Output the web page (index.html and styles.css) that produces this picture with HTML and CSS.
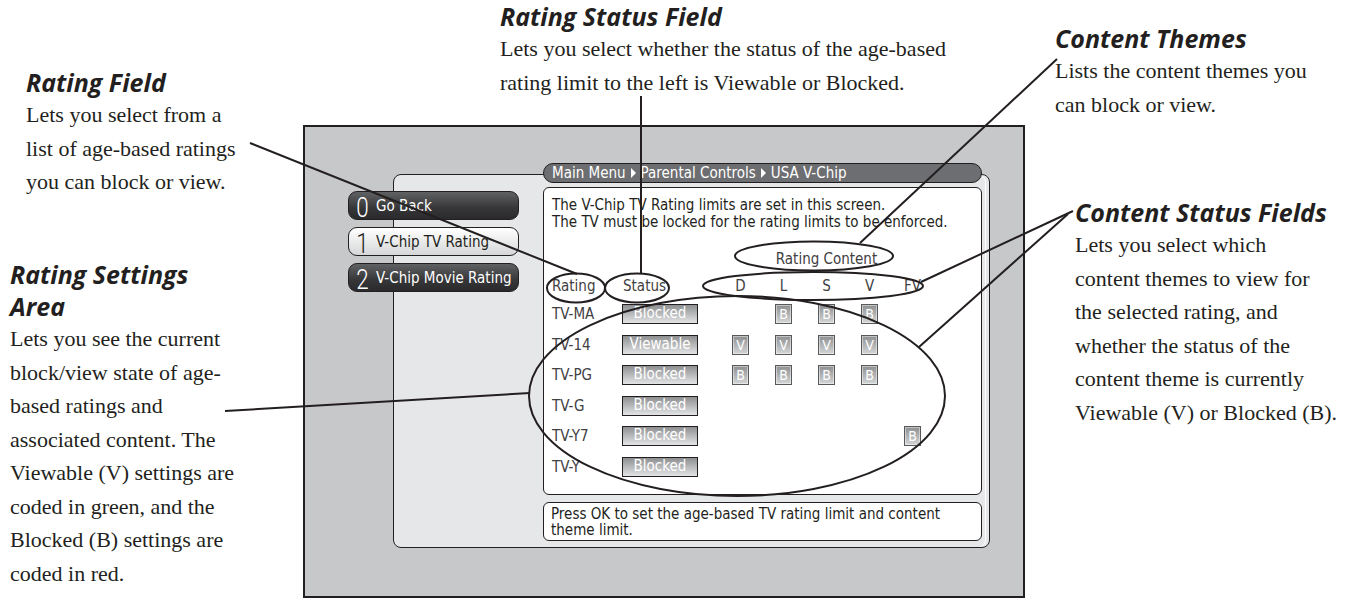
FILE: index.html
```html
<!DOCTYPE html>
<html lang="en">
<head>
    <meta charset="UTF-8">
    <meta name="viewport" content="width=device-width, initial-scale=1.0">
    <title>USA V-Chip</title>
    <link rel="stylesheet" href="styles.css">
</head>
<body>
<div class="page">
    <div class="tv">
        <div class="panel">
            <div class="menu">
                <div class="mbtn dark"><span class="num">0</span><span>Go Back</span></div>
                <div class="mbtn light"><span class="num">1</span><span>V-Chip TV Rating</span></div>
                <div class="mbtn dark"><span class="num">2</span><span>V-Chip Movie Rating</span></div>
            </div>
            <div class="main">
                <div class="crumb"><span>Main Menu</span><i class="tri"></i><span>Parental Controls</span><i class="tri"></i><span>USA V-Chip</span></div>
                <div class="screen">
                    <p class="intro">The V-Chip TV Rating limits are set in this screen.<br>The TV must be locked for the rating limits to be enforced.</p>
                    <div class="grid">
                        <div class="rc">Rating Content</div>

                        <div>Rating</div><div class="shd">Status</div><div></div>
                        <div class="c">D</div><div class="c">L</div><div class="c">S</div><div class="c">V</div><div class="c">FV</div>

                        <div>TV-MA</div><div class="st">Blocked</div><div></div>
                        <div></div><div class="bx">B</div><div class="bx">B</div><div class="bx">B</div><div></div>

                        <div>TV-14</div><div class="st">Viewable</div><div></div>
                        <div class="bx">V</div><div class="bx">V</div><div class="bx">V</div><div class="bx">V</div><div></div>

                        <div>TV-PG</div><div class="st">Blocked</div><div></div>
                        <div class="bx">B</div><div class="bx">B</div><div class="bx">B</div><div class="bx">B</div><div></div>

                        <div>TV-G</div><div class="st">Blocked</div><div></div>
                        <div></div><div></div><div></div><div></div><div></div>

                        <div>TV-Y7</div><div class="st">Blocked</div><div></div>
                        <div></div><div></div><div></div><div></div><div class="bx">B</div>

                        <div>TV-Y</div><div class="st">Blocked</div><div></div>
                        <div></div><div></div><div></div><div></div><div></div>
                    </div>
                </div>
                <div class="msg">Press OK to set the age-based TV rating limit and content<br>theme limit.</div>
            </div>
        </div>
    </div>

    <div class="note n-rf">
        <h2>Rating Field</h2>
        <p>Lets you select from a<br>list of age-based ratings<br>you can block or view.</p>
    </div>
    <div class="note n-rsf">
        <h2>Rating Status Field</h2>
        <p>Lets you select whether the status of the age-based<br>rating limit to the left is Viewable or Blocked.</p>
    </div>
    <div class="note n-ct">
        <h2>Content Themes</h2>
        <p>Lists the content themes you<br>can block or view.</p>
    </div>
    <div class="note n-rsa">
        <h2>Rating Settings<br>Area</h2>
        <p>Lets you see the current<br>block/view state of age-<br>based ratings and<br>associated content. The<br>Viewable (V) settings are<br>coded in green, and the<br>Blocked (B) settings are<br>coded in red.</p>
    </div>
    <div class="note n-csf">
        <h2>Content Status Fields</h2>
        <p>Lets you select which<br>content themes to view for<br>the selected rating, and<br>whether the status of the<br>content theme is currently<br>Viewable (V) or Blocked (B).</p>
    </div>

    <svg class="marks" width="1355" height="605" viewBox="0 0 1355 605">
        <g fill="none" stroke="#231f20" stroke-width="2">
            <line x1="250" y1="143" x2="577" y2="274"/>
            <line x1="641" y1="96" x2="641" y2="274"/>
            <line x1="1057" y1="59" x2="860" y2="243"/>
            <line x1="1073" y1="211" x2="921" y2="282"/>
            <line x1="1068" y1="214" x2="919" y2="347"/>
            <line x1="225" y1="411" x2="530" y2="393"/>
            <ellipse cx="576" cy="288" rx="29" ry="14.5"/>
            <ellipse cx="637" cy="288" rx="32" ry="14.5"/>
            <ellipse cx="814" cy="256" rx="79" ry="14.5"/>
            <ellipse cx="813" cy="286" rx="110" ry="14"/>
            <ellipse cx="737" cy="396" rx="208" ry="100"/>
        </g>
    </svg>
</div>
</body>
</html>
```

FILE: styles.css
```css
* {
    box-sizing: border-box;
}
body {
    margin: 0;
    background: #fff;
    color: #231f20;
}
.page {
    position: relative;
    width: 1355px;
    height: 605px;
    padding: 125px 0 0 303px;
    overflow: hidden;
}

/* tv screen */
.tv {
    width: 722px;
    height: 473px;
    border: 2px solid #231f20;
    background: #c7c8ca;
    padding: 47px 0 0 88px;
    font-family: "Liberation Sans Narrow", "DejaVu Sans Condensed", Roboto, sans-serif;
    font-size: 15px;
}
.panel {
    width: 597px;
    height: 374px;
    border: 1px solid #231f20;
    border-radius: 8px;
    background: #e6e7e8;
    box-shadow: inset -3px 0 0 #e6e7e8, inset -4px 0 0 #fff;
    display: flex;
    align-items: flex-start;
}
.menu {
    margin: 16px 0 0 -46px;
    width: 171px;
    display: flex;
    flex-direction: column;
    gap: 7px;
}
.mbtn {
    height: 29px;
    border: 1.5px solid #231f20;
    border-radius: 9px;
    display: flex;
    align-items: center;
    gap: 9px;
    padding-left: 6px;
    white-space: nowrap;
}
.mbtn .num {
    width: 12px;
    font-family: Roboto, sans-serif;
    font-weight: 300;
    font-size: 28px;
    line-height: 1;
    margin-top: 5px;
    transform: scaleX(0.8);
}
.dark {
    background: linear-gradient(#606163, #363638 60%, #2a2a2c);
    color: #fff;
}
.light {
    background: linear-gradient(#fff, #d6d7d8);
    color: #231f20;
}
.main {
    margin: -12px 7px 0 auto;
    width: 439px;
    display: flex;
    flex-direction: column;
}
.crumb {
    height: 20px;
    border: 1px solid #231f20;
    border-radius: 10px;
    background: #6d6e71;
    color: #fff;
    padding-left: 8px;
    line-height: 18px;
    display: flex;
    align-items: center;
    gap: 5px;
}
.tri {
    width: 0;
    height: 0;
    border-left: 5px solid #fff;
    border-top: 5px solid transparent;
    border-bottom: 5px solid transparent;
}
.screen {
    margin-top: 4px;
    height: 308px;
    background: #fff;
    border: 1px solid #231f20;
    border-radius: 6px;
    padding: 9px 8px;
}
.intro {
    margin: 0;
    line-height: 17px;
}
.grid {
    margin-top: 15px;
    display: grid;
    grid-template-columns: 70px 76px 21px repeat(5, 43px);
    grid-template-rows: 26px 27px repeat(6, 30.5px);
    align-items: center;
    color: #414042;
}
.rc {
    grid-column: 4 / 9;
    text-align: center;
}
.shd {
    padding-left: 1px;
}
.c {
    text-align: center;
}
.st {
    width: 76px;
    height: 20px;
    border: 1.5px solid #231f20;
    background: linear-gradient(#8e8f91, #e3e4e5);
    color: #fff;
    text-align: center;
    line-height: 17px;
}
.bx {
    justify-self: center;
    width: 17px;
    height: 20px;
    border: 1px solid #58595b;
    box-shadow: inset 0 0 0 1px rgba(255, 255, 255, 0.45);
    background: linear-gradient(#8e8f91, #d4d5d6);
    color: #fff;
    text-align: center;
    line-height: 18px;
    font-size: 14px;
}
.msg {
    margin-top: 7px;
    height: 39px;
    background: #fff;
    border: 1px solid #231f20;
    border-radius: 6px;
    padding: 3px 7px 0;
    line-height: 16px;
}

/* callouts */
.note {
    position: absolute;
    white-space: nowrap;
}
.note h2 {
    margin: 0;
    font: italic 700 25px/32px "Open Sans", sans-serif;
    color: #231f20;
}
.note p {
    margin: 0;
    font: 22px/33.5px "Liberation Serif", serif;
    color: #231f20;
}
.n-rf {
    left: 26px;
    top: 66px;
}
.n-rsf {
    left: 500px;
    top: 0;
}
.n-ct {
    left: 1055px;
    top: 22px;
}
.n-rsa {
    left: 10px;
    top: 258px;
}
.n-csf {
    left: 1075px;
    top: 196px;
}
.marks {
    position: absolute;
    left: 0;
    top: 0;
    pointer-events: none;
}
```
